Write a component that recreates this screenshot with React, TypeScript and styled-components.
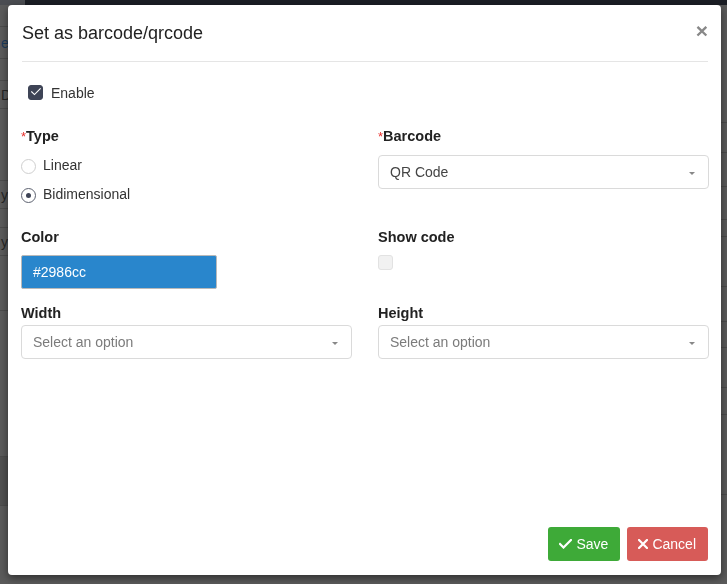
import React from 'react';
import styled, { createGlobalStyle } from 'styled-components';

const Global = createGlobalStyle`
  html, body { margin: 0; padding: 0; height: 100%; }
  body {
    font-family: "Liberation Sans", Arial, sans-serif;
    background: #5b5b5b;
    overflow: hidden;
    color: #333;
  }
  #root { height: 100%; }
`;

/* ---------- dimmed page behind the dialog ---------- */
const Page = styled.div`
  height: 100%;
  display: flex;
  flex-direction: column;
`;

const TopBar = styled.div`
  height: 5px;
  display: flex;
  flex-shrink: 0;
`;

const TopBarLeft = styled.div`
  width: 25px;
  background: #4b4d52;
`;

const TopBarRest = styled.div`
  flex: 1;
  background: #1b1e25;
`;

const PageBody = styled.div`
  flex: 1;
  display: grid;
  grid-template-columns: 40px 1fr 8px;
`;

const Strip = styled.div`
  display: flex;
  flex-direction: column;
  overflow: hidden;
`;

const StripRow = styled.div<{ $h: number; $dark?: boolean; $blue?: boolean }>`
  height: ${(p) => p.$h}px;
  flex-shrink: 0;
  box-sizing: border-box;
  border-bottom: 1px solid #4c4c4c;
  background: ${(p) => (p.$dark ? '#515151' : 'transparent')};
  font-size: 14px;
  color: ${(p) => (p.$blue ? '#1d3c5c' : '#262626')};
  display: flex;
  align-items: center;
  padding-left: 1px;
  white-space: nowrap;
`;

/* ---------- dialog ---------- */
const Overlay = styled.div`
  position: fixed;
  inset: 0;
  display: flex;
  box-sizing: border-box;
  padding: 5px 6px 9px 8px;
`;

const Modal = styled.div`
  flex: 1;
  background: #fff;
  border-radius: 4px;
  box-shadow: 0 3px 9px rgba(0, 0, 0, 0.5);
  display: flex;
  flex-direction: column;
`;

const Header = styled.div`
  margin: 0 13px 0 14px;
  padding: 15px 0;
  border-bottom: 1px solid #e5e5e5;
  display: flex;
  align-items: flex-start;
  justify-content: space-between;
`;

const Title = styled.h4`
  margin: 0;
  font-size: 18px;
  font-weight: normal;
  line-height: 26px;
  color: #222;
`;

const Close = styled.button`
  border: 0;
  background: none;
  padding: 0;
  margin-top: -2px;
  font-family: "Liberation Sans", Arial, sans-serif;
  font-size: 21px;
  font-weight: bold;
  line-height: 26px;
  color: #888;
  cursor: pointer;
`;

const Body = styled.div`
  padding: 20px 12px 0 13px;
`;

const EnableRow = styled.label`
  height: 20px;
  display: flex;
  align-items: center;
  padding-left: 7px;
  font-size: 14px;
  color: #333;
`;

const CheckBox = styled.span<{ $checked?: boolean }>`
  width: 15px;
  height: 15px;
  box-sizing: border-box;
  border-radius: 3px;
  display: inline-flex;
  align-items: center;
  justify-content: center;
  flex-shrink: 0;
  background: ${(p) => (p.$checked ? '#3e4456' : '#f1f1f1')};
  border: 1px solid ${(p) => (p.$checked ? '#3e4456' : '#e2e2e2')};
`;

const EnableText = styled.span`
  margin-left: 8px;
  margin-top: 1px;
`;

const Row = styled.div<{ $mt: number }>`
  display: grid;
  grid-template-columns: 1fr 1fr;
  column-gap: 26px;
  margin-top: ${(p) => p.$mt}px;
  align-items: start;
`;

const Field = styled.div`
  display: flex;
  flex-direction: column;
`;

const Label = styled.div<{ $mb: number }>`
  font-size: 14.5px;
  font-weight: bold;
  line-height: 20px;
  color: #222;
  margin-bottom: ${(p) => p.$mb}px;
`;

const Req = styled.span`
  color: #e8302c;
  font-weight: normal;
  font-size: 13px;
`;

const RadioList = styled.div`
  display: flex;
  flex-direction: column;
  gap: 7px;
`;

const RadioRow = styled.label`
  height: 22px;
  display: flex;
  align-items: center;
  font-size: 14px;
  color: #333;
`;

const RadioCircle = styled.span<{ $checked?: boolean }>`
  width: 15px;
  height: 15px;
  box-sizing: border-box;
  border-radius: 50%;
  border: 1px solid ${(p) => (p.$checked ? '#5d6270' : '#cfcfcf')};
  display: inline-flex;
  align-items: center;
  justify-content: center;
  margin-top: 2px;
  margin-right: 7px;
  flex-shrink: 0;
  &::after {
    content: '';
    width: 5px;
    height: 5px;
    border-radius: 50%;
    background: ${(p) => (p.$checked ? '#3e4456' : 'transparent')};
  }
`;

const Select = styled.div`
  height: 34px;
  box-sizing: border-box;
  border: 1px solid #dadada;
  border-radius: 4px;
  display: flex;
  align-items: center;
  padding: 0 13px 0 11px;
  background: #fff;
`;

const SelectValue = styled.span<{ $placeholder?: boolean }>`
  flex: 1;
  font-size: 14px;
  color: ${(p) => (p.$placeholder ? '#7b7b7b' : '#444')};
  margin-top: -1px;
`;

const Caret = styled.span`
  width: 0;
  height: 0;
  border-left: 3px solid transparent;
  border-right: 3px solid transparent;
  border-top: 3px solid #888;
  margin-top: 2px;
`;

const ColorInput = styled.div<{ $color: string }>`
  width: 196px;
  height: 34px;
  box-sizing: border-box;
  background: ${(p) => p.$color};
  border: 1px solid #b9b9b9;
  border-radius: 2px;
  display: flex;
  align-items: center;
  padding-left: 11px;
  font-size: 14px;
  color: #fff;
`;

const Footer = styled.div`
  margin-top: auto;
  padding: 0 13px 14px;
  display: flex;
  justify-content: flex-end;
  gap: 7px;
`;

const Button = styled.button<{ $variant: 'save' | 'cancel' }>`
  height: 34px;
  border: 0;
  border-radius: 3px;
  padding: 0 12px 0 11px;
  display: inline-flex;
  align-items: center;
  gap: 4px;
  font-family: "Liberation Sans", Arial, sans-serif;
  font-size: 14px;
  color: #fff;
  background: ${(p) => (p.$variant === 'save' ? '#3eaa38' : '#d75b58')};
  cursor: pointer;
`;

const CheckIcon = ({ size = 13, stroke = 2.2 }: { size?: number; stroke?: number }) => (
  <svg width={size} height={(size * 10) / 13} viewBox="0 0 13 10" fill="none">
    <polyline
      points="1,5 4.5,8.5 12,1"
      stroke="#fff"
      strokeWidth={stroke}
      strokeLinecap="square"
      strokeLinejoin="miter"
    />
  </svg>
);

const CrossIcon = () => (
  <svg width="10" height="10" viewBox="0 0 10 10" fill="none">
    <path d="M1 1 L9 9 M9 1 L1 9" stroke="#fff" strokeWidth="2.2" strokeLinecap="square" />
  </svg>
);

const leftRows: { h: number; t?: string; dark?: boolean; blue?: boolean }[] = [
  { h: 22 },
  { h: 32, t: 'er', blue: true },
  { h: 22 },
  { h: 28, t: 'Di' },
  { h: 72 },
  { h: 28, t: 'yle' },
  { h: 19 },
  { h: 28, t: 'yle' },
  { h: 55 },
  { h: 146 },
  { h: 49, dark: true },
  { h: 80 },
];

const rightRows: number[] = [118, 30, 34, 33, 17, 50, 35, 26, 40, 27, 80, 90];

export default function App() {
  return (
    <>
      <Global />
      <Page>
        <TopBar>
          <TopBarLeft />
          <TopBarRest />
        </TopBar>
        <PageBody>
          <Strip>
            {leftRows.map((r, i) => (
              <StripRow key={i} $h={r.h} $dark={r.dark} $blue={r.blue}>
                {r.t}
              </StripRow>
            ))}
          </Strip>
          <div />
          <Strip>
            {rightRows.map((h, i) => (
              <StripRow key={i} $h={h} />
            ))}
          </Strip>
        </PageBody>
      </Page>

      <Overlay>
        <Modal>
          <Header>
            <Title>Set as barcode/qrcode</Title>
            <Close aria-label="Close">×</Close>
          </Header>

          <Body>
            <EnableRow>
              <CheckBox $checked>
                <CheckIcon size={10} stroke={1.5} />
              </CheckBox>
              <EnableText>Enable</EnableText>
            </EnableRow>

            <Row $mt={24}>
              <Field>
                <Label $mb={7}>
                  <Req>*</Req>Type
                </Label>
                <RadioList>
                  <RadioRow>
                    <RadioCircle />
                    Linear
                  </RadioRow>
                  <RadioRow>
                    <RadioCircle $checked />
                    Bidimensional
                  </RadioRow>
                </RadioList>
              </Field>
              <Field>
                <Label $mb={8}>
                  <Req>*</Req>Barcode
                </Label>
                <Select>
                  <SelectValue>QR Code</SelectValue>
                  <Caret />
                </Select>
              </Field>
            </Row>

            <Row $mt={22}>
              <Field>
                <Label $mb={8}>Color</Label>
                <ColorInput $color="#2986cc">#2986cc</ColorInput>
              </Field>
              <Field>
                <Label $mb={8}>Show code</Label>
                <CheckBox />
              </Field>
            </Row>

            <Row $mt={14}>
              <Field>
                <Label $mb={2}>Width</Label>
                <Select>
                  <SelectValue $placeholder>Select an option</SelectValue>
                  <Caret />
                </Select>
              </Field>
              <Field>
                <Label $mb={2}>Height</Label>
                <Select>
                  <SelectValue $placeholder>Select an option</SelectValue>
                  <Caret />
                </Select>
              </Field>
            </Row>
          </Body>

          <Footer>
            <Button $variant="save">
              <CheckIcon />
              Save
            </Button>
            <Button $variant="cancel">
              <CrossIcon />
              Cancel
            </Button>
          </Footer>
        </Modal>
      </Overlay>
    </>
  );
}
